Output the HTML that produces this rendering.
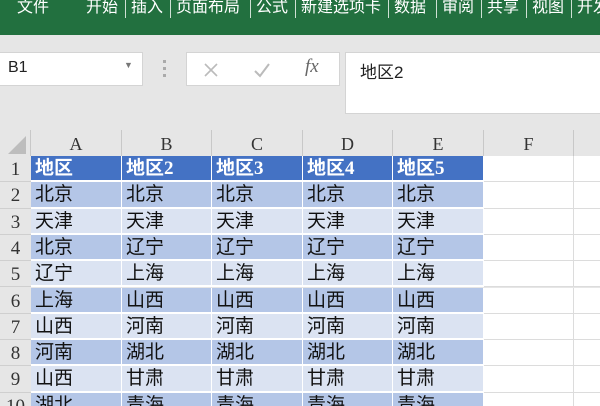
<!DOCTYPE html>
<html><head><meta charset="utf-8"><style>
*{margin:0;padding:0;box-sizing:border-box}
html,body{width:600px;height:406px;overflow:hidden}
body{background:#e6e6e6;position:relative;font-family:"Liberation Sans","Noto Sans CJK SC",sans-serif}
.a{position:absolute}
.top{left:0;top:0;width:600px;height:35px;background:#22703f}
.t{position:absolute;top:-2px;color:#fff;font-size:16px;line-height:20px;white-space:nowrap}
.sep{position:absolute;top:0;width:1px;height:18px;background:#cfe0d4}
.box{background:#fff;border:1px solid #d4d4d4}
.ch{position:absolute;top:130px;height:26px;background:#e6e6e6;border-right:1px solid #c8c8c8;font-family:"Liberation Serif","Noto Serif CJK SC",serif;font-size:18px;color:#333;text-align:center;line-height:28px}
.rh{position:absolute;left:0;width:31px;background:#e6e6e6;border-bottom:1px solid #cfcfcf;font-family:"Liberation Serif","Noto Serif CJK SC",serif;font-size:19px;color:#333;text-align:center}
.c{position:absolute;border-right:1px solid #fff;border-bottom:2px solid #fff;font-family:"Liberation Serif","Noto Sans CJK SC",serif;font-size:19px;color:#111;padding-left:4px;white-space:nowrap}
.h{background:#4472c4;color:#fff;font-weight:bold}
.d{background:#b4c6e7}
.l{background:#dbe3f2}
.w{background:#fff;border-right:1px solid #dcdcdc;border-bottom:1px solid #dcdcdc}
</style></head><body>
<div class="a top">
<span class="t" style="left:17px">文件</span>
<span class="t" style="left:86px">开始</span><i class="sep" style="left:125px"></i>
<span class="t" style="left:131px">插入</span><i class="sep" style="left:170px"></i>
<span class="t" style="left:176px">页面布局</span><i class="sep" style="left:250px"></i>
<span class="t" style="left:256px">公式</span><i class="sep" style="left:295px"></i>
<span class="t" style="left:301px">新建选项卡</span><i class="sep" style="left:388px"></i>
<span class="t" style="left:394px">数据</span><i class="sep" style="left:436px"></i>
<span class="t" style="left:442px">审阅</span><i class="sep" style="left:481px"></i>
<span class="t" style="left:487px">共享</span><i class="sep" style="left:526px"></i>
<span class="t" style="left:532px">视图</span><i class="sep" style="left:571px"></i>
<span class="t" style="left:577px">开发</span>
</div>
<div class="a box" style="left:-1px;top:52px;width:144px;height:34px"><span class="a" style="left:8px;top:6px;font-size:16px;color:#222">B1</span><span class="a" style="left:124px;top:7px;font-size:9px;color:#777">▼</span></div>
<div class="a" style="left:163px;top:60px;width:3px;height:3px;background:#aaa"></div>
<div class="a" style="left:163px;top:67px;width:3px;height:3px;background:#aaa"></div>
<div class="a" style="left:163px;top:74px;width:3px;height:3px;background:#aaa"></div>
<div class="a box" style="left:186px;top:52px;width:154px;height:34px">
<svg class="a" style="left:16px;top:9px" width="16" height="16"><path d="M2 2L14 14M14 2L2 14" stroke="#bbb" stroke-width="1.6"/></svg>
<svg class="a" style="left:66px;top:9px" width="18" height="16"><path d="M2 9L7 14L16 2" stroke="#bbb" stroke-width="2" fill="none"/></svg>
<span class="a" style="left:118px;top:3px;font-size:19px;font-style:italic;font-family:'Liberation Serif',serif;color:#666">fx</span>
</div>
<div class="a box" style="left:345px;top:52px;width:260px;height:62px"><span class="a" style="left:14px;top:5px;font-size:17px;color:#222">地区2</span></div>
<div class="a" style="left:0;top:130px;width:31px;height:26px;background:#e6e6e6;border-right:1px solid #c8c8c8"></div>
<div class="a" style="left:8px;top:136px;width:0;height:0;border-left:18px solid transparent;border-bottom:18px solid #bdbdbd"></div>
<div class="ch" style="left:31px;width:91px">A</div>
<div class="ch" style="left:122px;width:90px">B</div>
<div class="ch" style="left:212px;width:91px">C</div>
<div class="ch" style="left:303px;width:90px">D</div>
<div class="ch" style="left:393px;width:91px">E</div>
<div class="ch" style="left:484px;width:90px">F</div>
<div class="ch" style="left:574px;width:30px"></div>
<div id="g"></div>
<script>
var data=[["地区","地区2","地区3","地区4","地区5"],["北京","北京","北京","北京","北京"],["天津","天津","天津","天津","天津"],["北京","辽宁","辽宁","辽宁","辽宁"],["辽宁","上海","上海","上海","上海"],["上海","山西","山西","山西","山西"],["山西","河南","河南","河南","河南"],["河南","湖北","湖北","湖北","湖北"],["山西","甘肃","甘肃","甘肃","甘肃"],["湖北","青海","青海","青海","青海"]];
var xs=[31,122,212,303,393,484,574,604],h="";
for(var r=0;r<10;r++){var y=156+r*26.3,ht=26.3;
h+='<div class="rh" style="top:'+y+'px;height:'+ht+'px;line-height:'+(ht+2)+'px">'+(r+1)+'</div>';
for(var c=0;c<7;c++){var cls=c>=5?"w":(r==0?"h":(r%2?"d":"l"));var t=c<5?data[r][c]:"";
h+='<div class="c '+cls+'" style="left:'+xs[c]+'px;top:'+y+'px;width:'+(xs[c+1]-xs[c])+'px;height:'+ht+'px;line-height:'+(ht)+'px">'+t+'</div>';}}
document.getElementById("g").innerHTML=h;
</script>
</body></html>
